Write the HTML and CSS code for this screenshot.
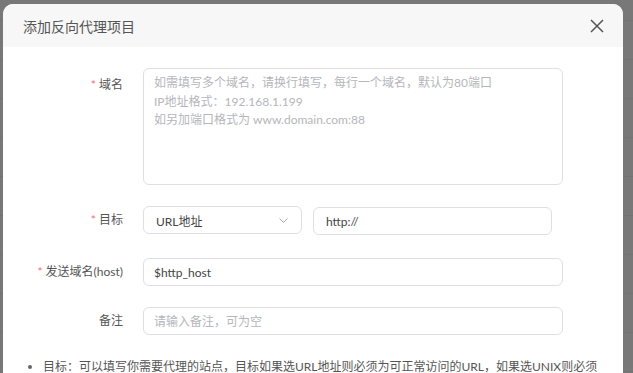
FILE: index.html
```html
<!DOCTYPE html>
<html lang="zh-CN">
<head>
    <meta charset="UTF-8">
    <meta name="viewport" content="width=device-width, initial-scale=1.0">
    <title>添加反向代理项目</title>
    <link rel="stylesheet" href="styles.css">
</head>
<body>
    <div class="modal">
        <div class="modal-head">
            <span class="modal-title">添加反向代理项目</span>
            <span class="close-btn">
                <svg width="14" height="14" viewBox="0 0 14 14">
                    <path d="M1 1 L13 13 M13 1 L1 13" stroke="#555" stroke-width="1.5" fill="none"/>
                </svg>
            </span>
        </div>
        <div class="modal-body">
            <div class="form-row">
                <label class="form-label label-area"><span class="req">*</span> 域名</label>
                <textarea class="field textarea" placeholder="如需填写多个域名，请换行填写，每行一个域名，默认为80端口&#10;IP地址格式：192.168.1.199&#10;如另加端口格式为 www.domain.com:88"></textarea>
            </div>
            <div class="form-row row-target">
                <label class="form-label"><span class="req">*</span> 目标</label>
                <div class="field select">
                    <span>URL地址</span>
                    <svg width="9" height="5" viewBox="0 0 9 5">
                        <path d="M0.5 0.5 L4.5 4.5 L8.5 0.5" stroke="#aaa" stroke-width="1" fill="none"/>
                    </svg>
                </div>
                <input class="field input url-input" type="text" value="http://">
            </div>
            <div class="form-row">
                <label class="form-label"><span class="req">*</span> 发送域名(host)</label>
                <input class="field input wide" type="text" value="$http_host">
            </div>
            <div class="form-row">
                <label class="form-label">备注</label>
                <input class="field input wide" type="text" placeholder="请输入备注，可为空">
            </div>
            <ul class="tips">
                <li>目标：可以填写你需要代理的站点，目标如果选URL地址则必须为可正常访问的URL，如果选UNIX则必须</li>
            </ul>
        </div>
    </div>
</body>
</html>
```

FILE: styles.css
```css
body {
    margin: 0;
    height: 373px;
    overflow: hidden;
    font-family: Lato, "Noto Sans CJK SC", sans-serif;
    font-size: 12px;
    color: #555;
    background-color: #787878;
    background-image: repeating-linear-gradient(to bottom, transparent 0, transparent 20px, #727272 20px, #727272 21px, transparent 21px, transparent 39px);
}
.modal {
    margin: 4px 0 0 3px;
    width: 620px;
    height: 369px;
    background: #ffffff;
    border-radius: 10px 10px 0 0;
    overflow: hidden;
}
.modal-head {
    height: 43px;
    background: #f7f7f7;
    padding: 0 20px;
    display: flex;
    justify-content: space-between;
    align-items: center;
}
.modal-title {
    font-size: 14px;
    color: #555;
}
.close-btn {
    display: flex;
    margin-right: -1px;
}
.modal-body {
    padding: 21px 0 0 20px;
}
.form-row {
    display: flex;
    align-items: flex-start;
    margin-bottom: 21px;
}
.row-target {
    margin-bottom: 23px;
}
.form-label {
    width: 100px;
    padding-right: 20px;
    text-align: right;
    line-height: 28px;
    color: #555;
    white-space: nowrap;
}
.label-area {
    padding-top: 3px;
}
.req {
    color: #f56c6c;
}
.field {
    box-sizing: border-box;
    border: 1px solid #dcdfe6;
    border-radius: 6px;
    background: #fff;
    font-family: inherit;
    font-size: 12px;
    color: #444;
    outline: none;
}
.textarea {
    width: 420px;
    height: 117px;
    padding: 5px 10px;
    line-height: 18.5px;
    resize: none;
}
.input {
    height: 28px;
    padding: 0 10px;
    line-height: 26px;
}
.wide {
    width: 420px;
}
.select {
    width: 159px;
    height: 28px;
    padding: 0 13px 0 12px;
    display: flex;
    justify-content: space-between;
    align-items: center;
}
.url-input {
    width: 239px;
    margin-left: 11px;
    margin-top: 1px;
    padding-left: 12px;
}
.field::placeholder {
    color: #b4b6ba;
}
.tips {
    margin: 0;
    padding: 2px 0 0 20px;
    line-height: 18px;
    color: #555;
}
.tips li {
    white-space: nowrap;
}
.tips li::marker {
    color: #666;
}
```
